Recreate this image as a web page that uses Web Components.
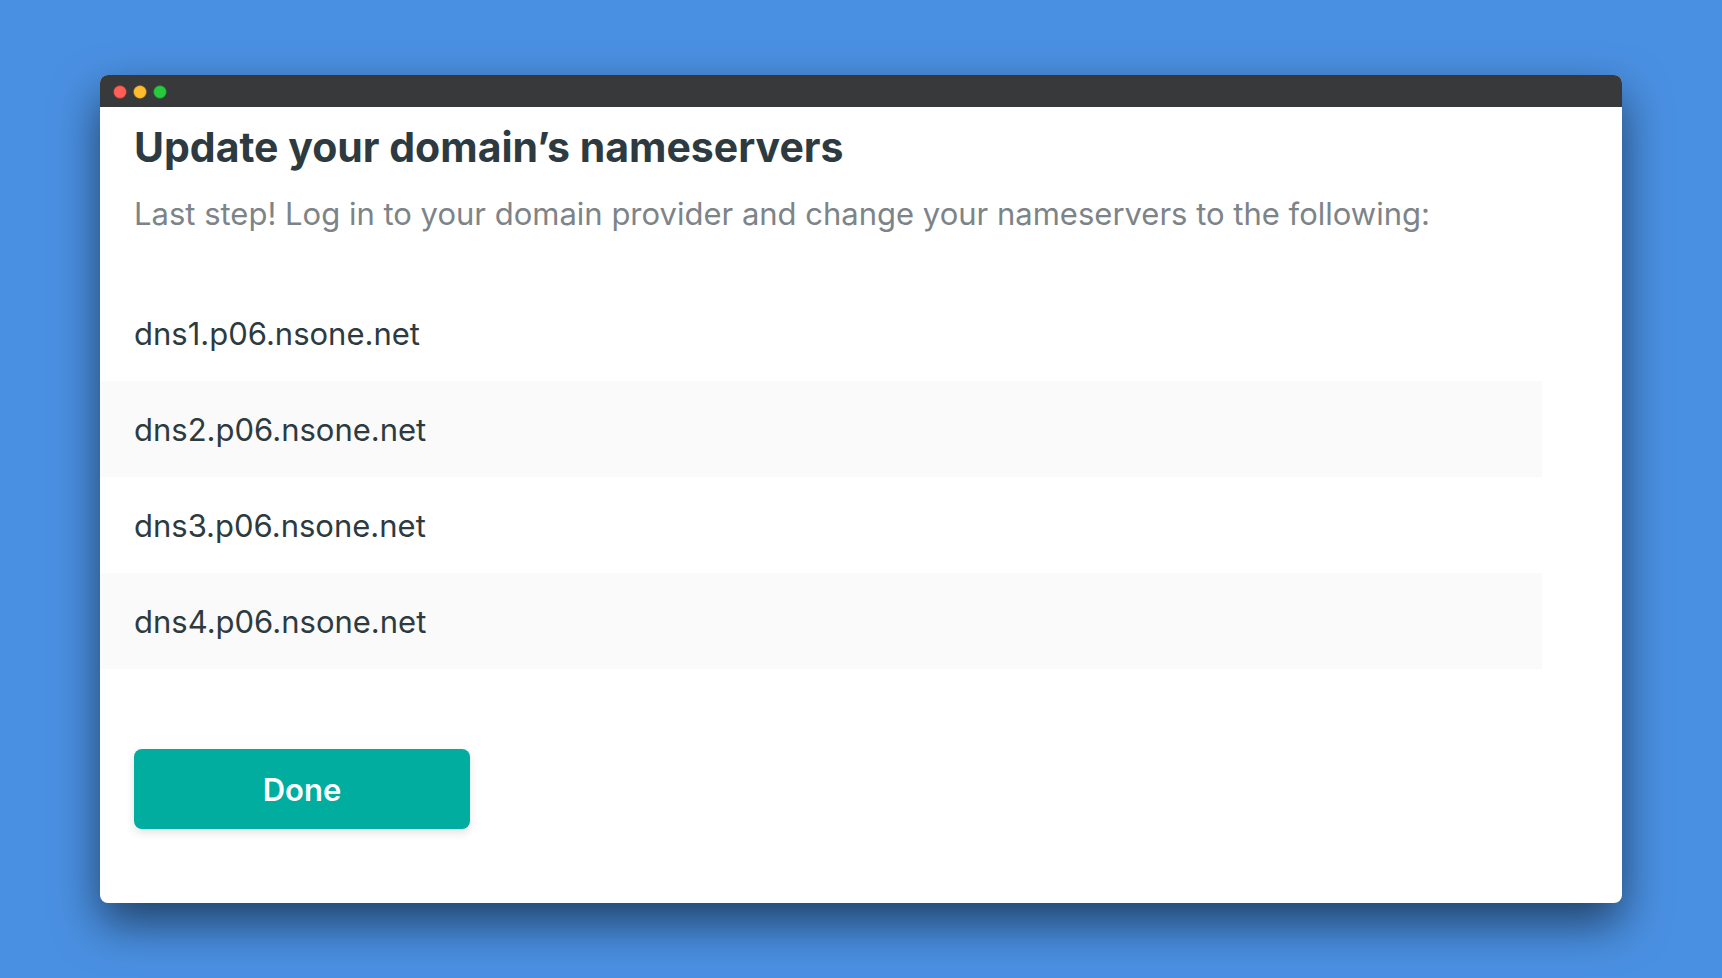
<!DOCTYPE html>
<html lang="en">
<head>
<meta charset="utf-8">
<meta name="viewport" content="width=device-width, initial-scale=1">
<title>Update your domain’s nameservers</title>
<style>
  body {
    margin: 0;
    min-height: 100vh;
    box-sizing: border-box;
    padding: 75px 100px;
    background: #4a90e2;
    color: #2d3b41;
    font-family: Inter, "Liberation Sans", sans-serif;
  }
</style>
</head>
<body>
  <app-window>
    <nameserver-setup>
      <span slot="title">Update your domain’s nameservers</span>
      <span slot="description">Last step! Log in to your domain provider and change your nameservers to the following:</span>
      <nameserver-list servers="dns1.p06.nsone.net,dns2.p06.nsone.net,dns3.p06.nsone.net,dns4.p06.nsone.net"></nameserver-list>
      <primary-button slot="actions">Done</primary-button>
    </nameserver-setup>
  </app-window>

<script>
class AppWindow extends HTMLElement {
  constructor() {
    super();
    this.attachShadow({ mode: 'open' });
  }

  connectedCallback() {
    this.shadowRoot.innerHTML = `
      <style>
        :host {
          display: block;
          border-radius: 8px;
          background: #fff;
          box-shadow: 0 20px 46px rgba(0, 0, 0, 0.55);
        }

        header {
          display: flex;
          align-items: center;
          height: 32px;
          padding: 0 13px;
          border-radius: 8px 8px 0 0;
          background: #37393a;
        }

        svg {
          display: block;
        }
      </style>
      <header>
        <svg width="54" height="16" viewBox="0 0 54 16" aria-hidden="true">
          <circle cx="7" cy="9" r="6.2" fill="#ff5f56" stroke="#e0443e" stroke-width="0.6"/>
          <circle cx="27" cy="9" r="6.2" fill="#ffbd2e" stroke="#dea123" stroke-width="0.6"/>
          <circle cx="47" cy="9" r="6.2" fill="#27c93f" stroke="#1aab29" stroke-width="0.6"/>
        </svg>
      </header>
      <slot></slot>
    `;
  }
}

class NameserverSetup extends HTMLElement {
  constructor() {
    super();
    this.attachShadow({ mode: 'open' });
  }

  connectedCallback() {
    this.shadowRoot.innerHTML = `
      <style>
        :host {
          display: block;
          padding: 13px 80px 74px 0;
        }

        h1,
        p,
        .actions {
          margin: 0;
          padding: 0 34px;
        }

        h1 {
          font-size: 41px;
          font-weight: 700;
          line-height: 54px;
        }

        p {
          margin: 20px 0 51px;
          color: #7d8488;
          font-size: 31px;
          line-height: 40px;
        }

        .actions {
          margin-top: 80px;
        }
      </style>
      <h1><slot name="title"></slot></h1>
      <p><slot name="description"></slot></p>
      <slot></slot>
      <div class="actions"><slot name="actions"></slot></div>
    `;
  }
}

class NameserverList extends HTMLElement {
  constructor() {
    super();
    this.attachShadow({ mode: 'open' });
  }

  connectedCallback() {
    const servers = (this.getAttribute('servers') || '').split(',');

    this.shadowRoot.innerHTML = `
      <style>
        :host {
          display: block;
        }

        ul {
          margin: 0;
          padding: 0;
          list-style: none;
        }

        li {
          padding: 29px 34px 27px;
          font-size: 31px;
          line-height: 40px;
        }

        li:nth-child(even) {
          background: #fafafa;
        }
      </style>
      <ul>
        ${servers.map((server) => `<li>${server}</li>`).join('')}
      </ul>
    `;
  }
}

class PrimaryButton extends HTMLElement {
  constructor() {
    super();
    this.attachShadow({ mode: 'open' });
  }

  connectedCallback() {
    this.shadowRoot.innerHTML = `
      <style>
        :host {
          display: block;
        }

        button {
          display: block;
          min-width: 336px;
          padding: 21px 32px 19px;
          border: 0;
          border-radius: 8px;
          background: #00ad9f;
          box-shadow: 0 4px 8px rgba(14, 30, 37, 0.12);
          color: #fff;
          font-family: inherit;
          font-size: 31px;
          font-weight: 600;
          line-height: 40px;
          cursor: pointer;
        }

        button:hover {
          background: #009a8e;
        }
      </style>
      <button type="button"><slot></slot></button>
    `;
  }
}

customElements.define('app-window', AppWindow);
customElements.define('nameserver-setup', NameserverSetup);
customElements.define('nameserver-list', NameserverList);
customElements.define('primary-button', PrimaryButton);
</script>
</body>
</html>
